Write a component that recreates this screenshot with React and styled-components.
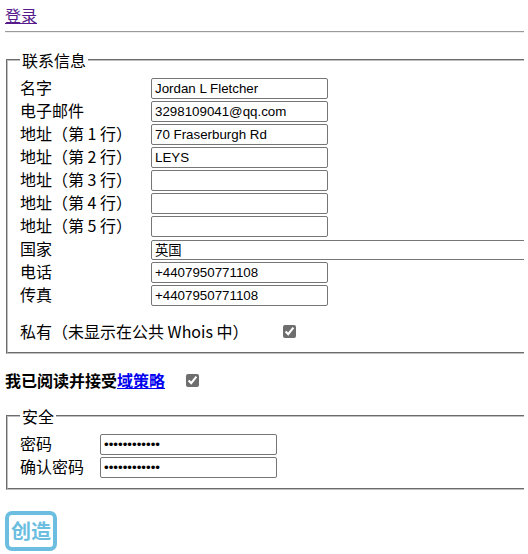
import React from "react";
import styled, { createGlobalStyle } from "styled-components";

const Global = createGlobalStyle`
    html, body {
        overflow: hidden;
    }
    body {
        margin: 4px;
        background: #fff;
        color: #000;
        font-family: "Noto Sans CJK SC", "Noto Sans", sans-serif;
        font-size: 16px;
        line-height: 20px;
    }
`;

const Page = styled.div`
    width: 640px;
`;

const LoginLink = styled.a`
    display: inline-block;
    margin: 1px 0 0 1px;
    color: #551a8b;
    text-decoration: underline;
`;

const Rule = styled.hr`
    margin: 6px 0 0 1px;
    border: none;
    border-top: 1px solid #9a9a9a;
    border-bottom: 1px solid #eeeeee;
`;

const Fieldset = styled.fieldset`
    margin: ${(p) => p.$top}px 0 0 2px;
    padding: 6px 12px 10px 12px;
    border: 2px groove #c0c0c0;
    min-width: 0;

    legend {
        padding: 0 2px;
        line-height: 20px;
    }
`;

const FormGrid = styled.div`
    display: grid;
    grid-template-columns: ${(p) => p.$label}px 1fr;
    grid-auto-rows: 21px;
    row-gap: 2px;
    align-items: center;
    margin-top: ${(p) => p.$top || 0}px;
`;

const Label = styled.span`
    line-height: 19px;
    padding-bottom: 2px;
    white-space: nowrap;
`;

const Field = styled.div`
    display: flex;
    align-items: center;
`;

const Input = styled.input`
    box-sizing: border-box;
    width: ${(p) => (p.$wide ? "420px" : "177px")};
    height: ${(p) => (p.$wide ? "20px" : "21px")};
    margin: 0;
    padding: 1px 3px;
    border: 1px solid #767676;
    border-radius: 2px;
    font-family: "Liberation Sans", Arial, "Noto Sans CJK SC", sans-serif;
    font-size: 13.33px;
    color: #000;
    background: #fff;
`;

const CheckRow = styled.div`
    display: flex;
    align-items: center;
    margin-top: ${(p) => p.$top || 0}px;
    font-weight: ${(p) => (p.$bold ? 700 : 400)};
    padding-left: ${(p) => p.$left || 0}px;
    line-height: 22px;
`;

const Check = styled.input`
    margin: 0 0 0 ${(p) => p.$gap}px;
    width: 13px;
    height: 13px;
    accent-color: #6e6e6e;
`;

const PolicyLink = styled.a`
    color: #0000ee;
    text-decoration: underline;
`;

const CreateButton = styled.button`
    display: block;
    margin: 21px 0 0 1px;
    width: 52px;
    height: 40px;
    box-sizing: border-box;
    border: 4px solid #6cbee0;
    border-radius: 7px;
    background: #fff;
    color: #6cbee0;
    font-family: "Noto Sans CJK SC", sans-serif;
    font-size: 20px;
    font-weight: 700;
    line-height: 28px;
    padding: 0;
`;

const contact = [
    ["名字", "Jordan L Fletcher"],
    ["电子邮件", "3298109041@qq.com"],
    ["地址（第 1 行）", "70 Fraserburgh Rd"],
    ["地址（第 2 行）", "LEYS"],
    ["地址（第 3 行）", ""],
    ["地址（第 4 行）", ""],
    ["地址（第 5 行）", ""],
    ["国家", "英国", true],
    ["电话", "+4407950771108"],
    ["传真", "+4407950771108"],
];

const noop = () => {};

const App = () => {
    return (
        <Page>
            <Global />
            <LoginLink href="#">登录</LoginLink>
            <Rule />
            <Fieldset $top={17}>
                <legend>联系信息</legend>
                <FormGrid $label={131} $top={2}>
                    {contact.map(([label, value, wide]) => (
                        <React.Fragment key={label}>
                            <Label>{label}</Label>
                            <Field>
                                <Input $wide={wide} defaultValue={value} readOnly />
                            </Field>
                        </React.Fragment>
                    ))}
                </FormGrid>
                <CheckRow $top={14}>
                    私有（未显示在公共 Whois 中）
                    <Check type="checkbox" $gap={34} checked onChange={noop} />
                </CheckRow>
            </Fieldset>
            <CheckRow $top={15} $left={1} $bold>
                我已阅读并接受<PolicyLink href="#">域策略</PolicyLink>
                <Check type="checkbox" $gap={21} checked onChange={noop} />
            </CheckRow>
            <Fieldset $top={15}>
                <legend>安全</legend>
                <FormGrid $label={80} $top={2}>
                    <Label>密码</Label>
                    <Field>
                        <Input type="password" defaultValue="123456789012" readOnly />
                    </Field>
                    <Label>确认密码</Label>
                    <Field>
                        <Input type="password" defaultValue="123456789012" readOnly />
                    </Field>
                </FormGrid>
            </Fieldset>
            <CreateButton>创造</CreateButton>
        </Page>
    );
};

export default App;
